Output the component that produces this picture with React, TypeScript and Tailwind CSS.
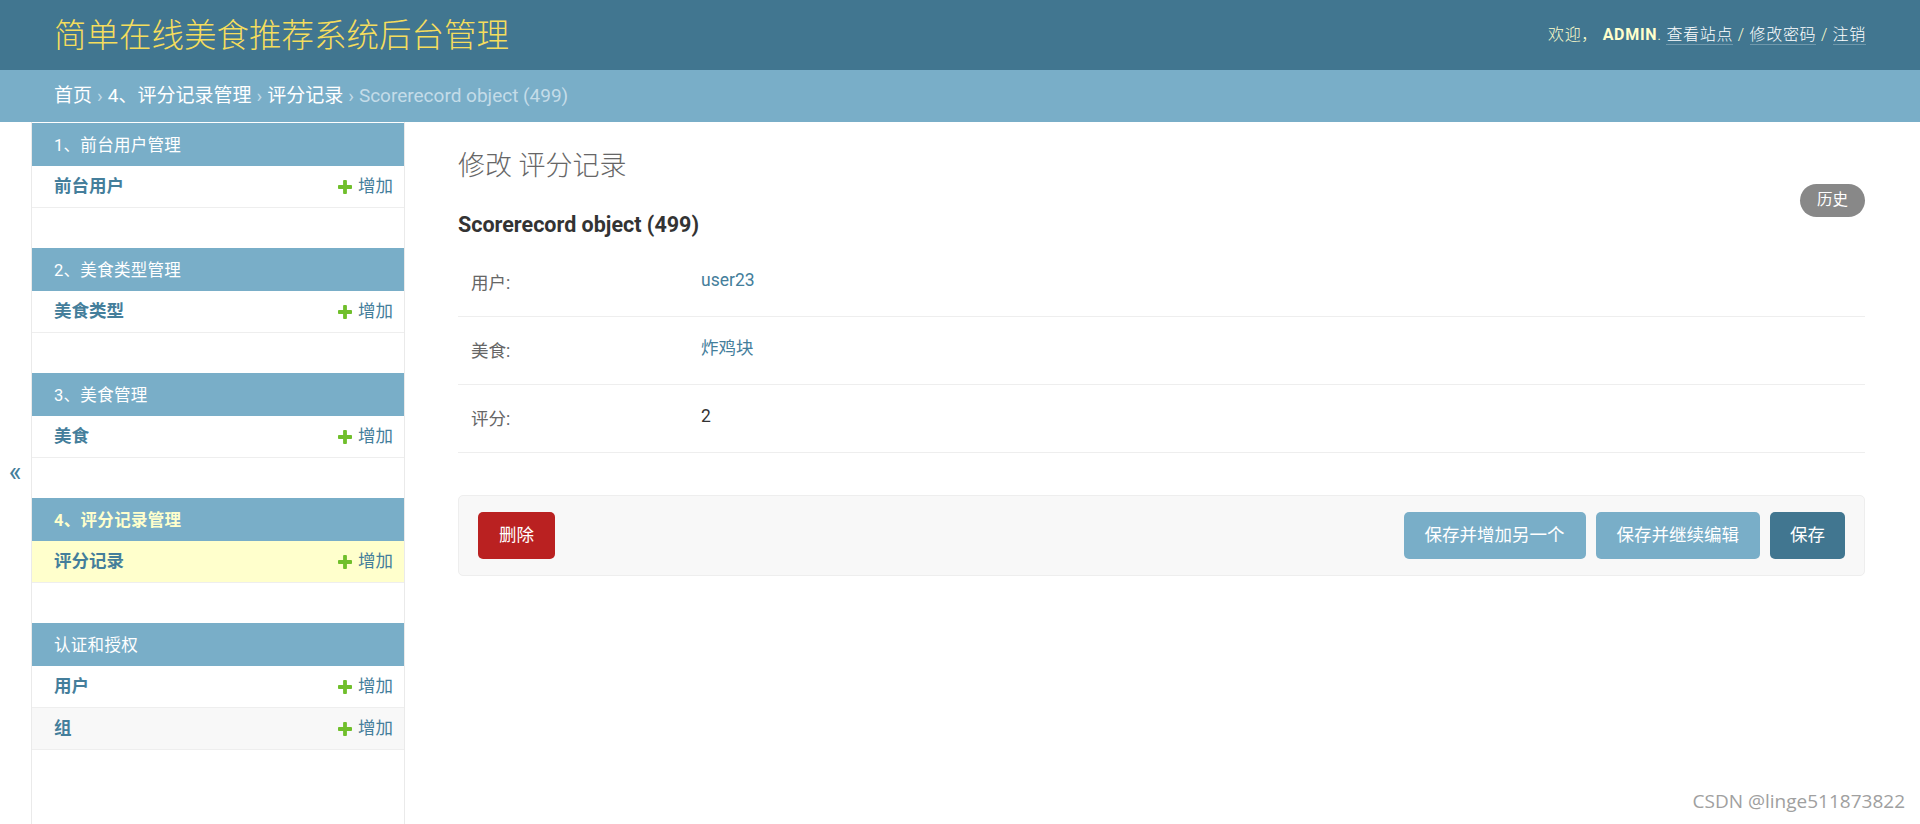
const modules = [
  { caption: "1、前台用户管理", rows: ["前台用户"] },
  { caption: "2、美食类型管理", rows: ["美食类型"] },
  { caption: "3、美食管理", rows: ["美食"] },
  { caption: "4、评分记录管理", rows: ["评分记录"], current: true },
  { caption: "认证和授权", rows: ["用户", "组"] },
];

const fields = [
  { label: "用户:", value: "user23", link: true },
  { label: "美食:", value: "炸鸡块", link: true },
  { label: "评分:", value: "2", link: false },
];

function AddIcon() {
  return (
    <svg viewBox="192 188 1408 1408" className="w-[14px] h-[14px]" aria-hidden="true">
      <path
        fill="#70bf2b"
        d="M1600 796v192q0 40-28 68t-68 28h-416v416q0 40-28 68t-68 28h-192q-40 0-68-28t-28-68v-416h-416q-40 0-68-28t-28-68v-192q0-40 28-68t68-28h416v-416q0-40 28-68t68-28h192q40 0 68 28t28 68v416h416q40 0 68 28t28 68z"
      />
    </svg>
  );
}

export default function App() {
  return (
    <div className="relative h-[824px] flex flex-col overflow-hidden bg-white font-['Roboto','Noto_Sans_CJK_SC',sans-serif]">
      {/* Header */}
      <header className="h-[70px] shrink-0 bg-[#417690] flex items-center justify-between px-[54px]">
        <h1 className="text-[32.5px] font-light text-[#f5dd5d] leading-none pt-[2px]">
          简单在线美食推荐系统后台管理
        </h1>
        <div className="text-[16px] tracking-[0.7px] text-[#ffc] font-light uppercase">
          欢迎， <strong className="font-bold">admin</strong>.{" "}
          <a className="text-white border-b border-white/25">查看站点</a> /{" "}
          <a className="text-white border-b border-white/25">修改密码</a> /{" "}
          <a className="text-white border-b border-white/25">注销</a>
        </div>
      </header>

      {/* Breadcrumbs */}
      <div className="h-[52px] shrink-0 bg-[#79aec8] flex items-center px-[54px] text-[19px] text-[#c4dce8]">
        <a className="text-white">首页</a>
        <span className="px-[5px]">›</span>
        <a className="text-white">4、评分记录管理</a>
        <span className="px-[5px]">›</span>
        <a className="text-white">评分记录</a>
        <span className="px-[5px]">›</span>
        <span>Scorerecord object (499)</span>
      </div>

      <div className="flex flex-1 min-h-0">
        {/* Sidebar toggle */}
        <button className="w-[32px] shrink-0 border-r border-[#eaeaea] flex items-center justify-center text-[27px] leading-none text-[#447e9b] pb-[2px] pr-[1px]">
          «
        </button>

        {/* Sidebar */}
        <nav className="w-[373px] shrink-0 border-r border-[#eaeaea] pt-[1px]">
          {modules.map((m) => (
            <div key={m.caption} className="mb-[40px]">
              <div
                className={`h-[43px] bg-[#79aec8] flex items-center pl-[22px] pt-[3px] text-[16.5px] tracking-[0.3px] ${
                  m.current ? "text-[#ffc] font-bold" : "text-white"
                }`}
              >
                {m.caption}
              </div>
              {m.rows.map((r, i) => (
                <div
                  key={r}
                  className={`h-[42px] flex items-center justify-between border-b border-[#eee] pl-[22px] pr-[11px] ${
                    m.current ? "bg-[#ffc]" : i % 2 === 1 ? "bg-[#f8f8f8]" : "bg-white"
                  }`}
                >
                  <a className="text-[17.5px] font-bold text-[#447e9b]">{r}</a>
                  <a className="flex items-center gap-[6px] text-[17.5px] text-[#447e9b]">
                    <AddIcon />
                    增加
                  </a>
                </div>
              ))}
            </div>
          ))}
        </nav>

        {/* Content */}
        <main className="flex-1 min-w-0 pl-[53px] pr-[55px] pt-[27px]">
          <h1 className="text-[27px] leading-[34px] font-light text-[#666]">修改 评分记录</h1>
          <div className="flex items-start justify-between">
            <h2 className="mt-[28px] text-[21.5px] leading-[28px] font-bold text-[#333]">
              Scorerecord object (499)
            </h2>
            <a className="mt-[1px] h-[33px] px-[17px] rounded-full bg-[#888] text-white text-[15.5px] flex items-center">
              历史
            </a>
          </div>

          <div className="mt-[10px]">
            {fields.map((f) => (
              <div key={f.label} className="h-[68px] flex border-b border-[#eee] px-[13px] pt-[14px]">
                <div className="w-[230px] pt-[9px] leading-[22px] text-[17.5px] text-[#666]">{f.label}</div>
                <div
                  className={`pt-[6px] leading-[22px] text-[17.5px] ${
                    f.link ? "text-[#447e9b]" : "text-[#333]"
                  }`}
                >
                  {f.value}
                </div>
              </div>
            ))}
          </div>

          <div className="mt-[42px] flex items-center justify-between border border-[#eee] bg-[#f8f8f8] rounded-[5px] px-[19px] py-[16px]">
            <a className="h-[47px] px-[21px] rounded-[5px] bg-[#ba2121] text-white text-[17.5px] flex items-center">
              删除
            </a>
            <div className="flex gap-[10px]">
              <button className="h-[47px] px-[21px] rounded-[5px] bg-[#79aec8] text-white text-[17.5px]">
                保存并增加另一个
              </button>
              <button className="h-[47px] px-[21px] rounded-[5px] bg-[#79aec8] text-white text-[17.5px]">
                保存并继续编辑
              </button>
              <button className="h-[47px] px-[20px] rounded-[5px] bg-[#417690] text-white text-[17.5px]">
                保存
              </button>
            </div>
          </div>
        </main>
      </div>

      {/* Watermark */}
      <div className="absolute right-[15px] bottom-[10px] leading-[26px] text-[19px] text-[#a0a0a0] font-['Open_Sans',sans-serif]">
        CSDN @linge511873822
      </div>
    </div>
  );
}
